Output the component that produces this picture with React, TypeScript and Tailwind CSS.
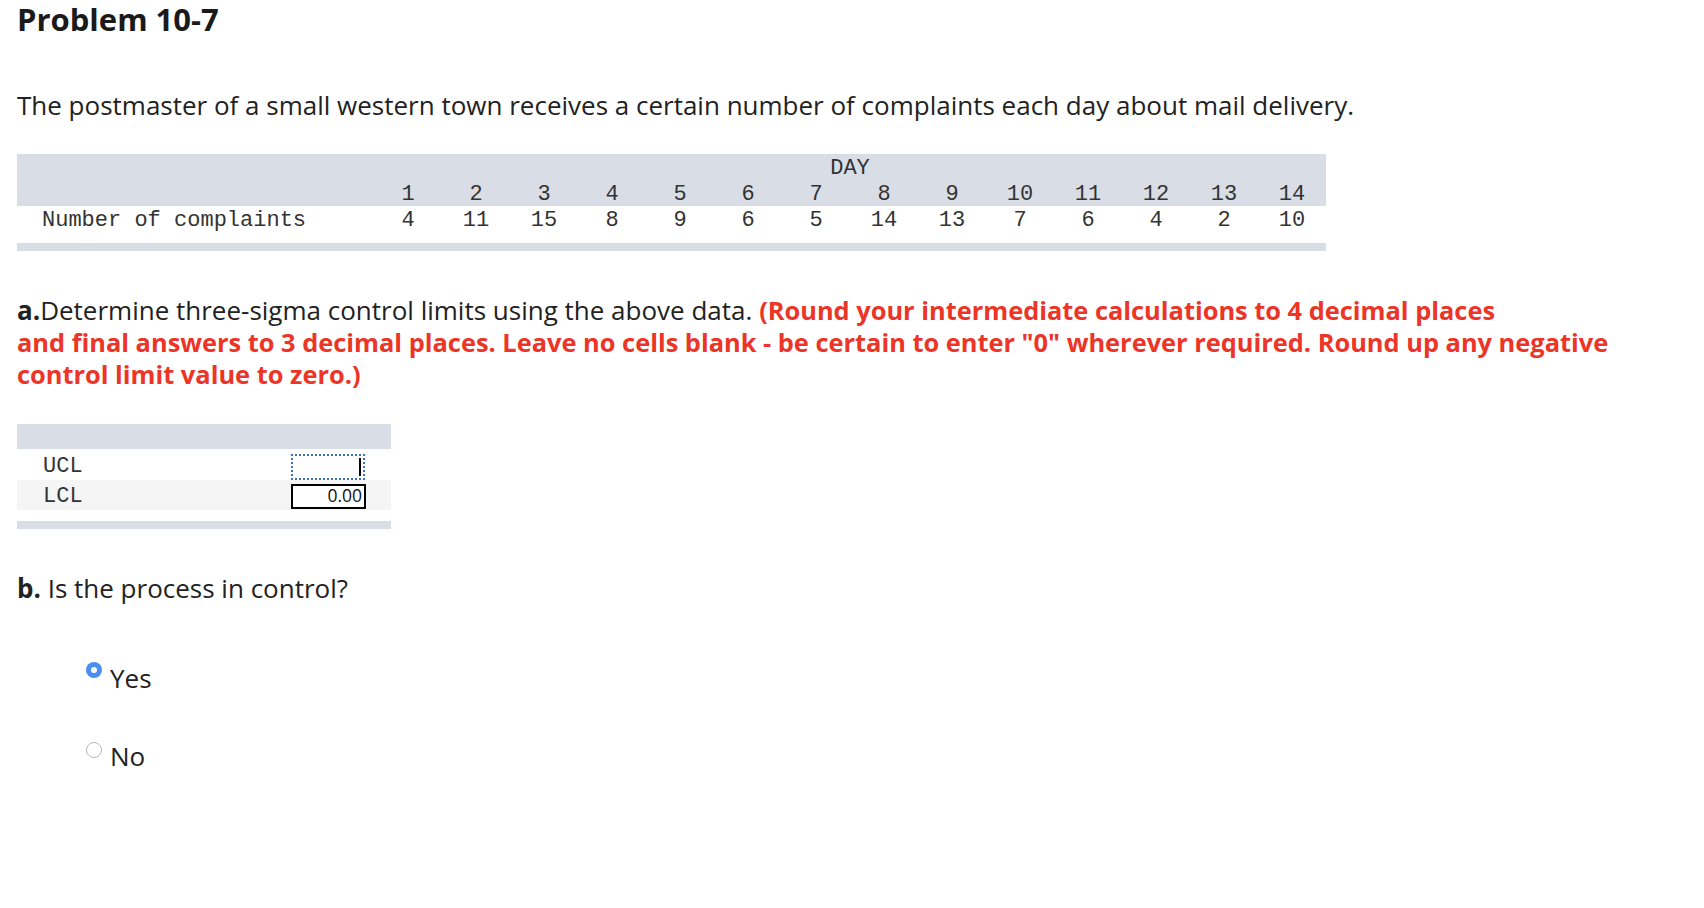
import React from 'react'

const days = [1, 2, 3, 4, 5, 6, 7, 8, 9, 10, 11, 12, 13, 14]
const complaints = [4, 11, 15, 8, 9, 6, 5, 14, 13, 7, 6, 4, 2, 10]

const sans = "font-['Open_Sans',Lato,sans-serif]"
const mono = "font-['Liberation_Mono','DejaVu_Sans_Mono',monospace]"

function DataTable() {
  return (
    <div className="mt-[33px] w-[1309px]">
      <table className={`${mono} text-[22px] text-[#333] border-collapse table-fixed w-full`}>
        <colgroup>
          <col className="w-[357px]" />
          {days.map((d) => (
            <col key={d} className="w-[68px]" />
          ))}
        </colgroup>
        <thead>
          <tr className="bg-[#d9dde6] h-[26px]">
            <th />
            <th colSpan={14} className="font-normal text-center align-top leading-[22px] pt-[4px]">
              DAY
            </th>
          </tr>
          <tr className="bg-[#d9dde6] h-[26px]">
            <th />
            {days.map((d) => (
              <th key={d} className="font-normal text-center align-top leading-[22px] pt-[4px]">
                {d}
              </th>
            ))}
          </tr>
        </thead>
        <tbody>
          <tr className="h-[26px]">
            <td className="pl-[25px] align-top leading-[22px] pt-[4px] whitespace-nowrap">Number of complaints</td>
            {complaints.map((c, i) => (
              <td key={i} className="text-center align-top leading-[22px] pt-[4px]">
                {c}
              </td>
            ))}
          </tr>
        </tbody>
      </table>
      <div className="h-[11px]" />
      <div className="h-[8px] bg-[#d9dde6]" />
    </div>
  )
}

function LimitsTable() {
  return (
    <div className={`${mono} mt-[34px] w-[374px] text-[22px] text-[#333]`}>
      <div className="h-[25px] bg-[#d9dde6]" />
      <div className="flex items-center justify-between pl-[26px] pr-[26px] pt-[5px]">
        <span className="leading-[26px]">UCL</span>
        <div className="w-[74px] h-[26px] border-2 border-dotted border-[#3b73c4] flex items-center justify-end pr-[2px]">
          <div className="w-[2px] h-[18px] bg-black" />
        </div>
      </div>
      <div className="flex items-center justify-between pl-[26px] pr-[25px] pt-[4px] pb-[1px] bg-[#f5f5f5]">
        <span className="leading-[25px]">LCL</span>
        <div className={`${sans} w-[75px] h-[25px] border-2 border-black bg-white text-right pr-[2px] text-[17.5px] leading-[19px] text-[#111]`}>
          0.00
        </div>
      </div>
      <div className="h-[11px]" />
      <div className="h-[8px] bg-[#d9dde6]" />
    </div>
  )
}

function Radio({ label, checked }: { label: string; checked?: boolean }) {
  return (
    <label className="flex items-start pl-[69px]">
      {checked ? (
        <span className="mt-0 w-[16px] h-[16px] rounded-full bg-[#4a8ff0] flex items-center justify-center">
          <span className="w-[6px] h-[6px] rounded-full bg-white" />
        </span>
      ) : (
        <span className="mt-[2px] w-[16px] h-[16px] rounded-full border border-[#b8b8b8] bg-white" />
      )}
      <span className="ml-[8px] text-[26px] leading-[32px] text-[#222]">{label}</span>
    </label>
  )
}

export default function App() {
  return (
    <div className={`${sans} min-h-[908px] w-full bg-white px-[17px] text-[#222]`}>
      <h1 className="pt-[2px] text-[31px] font-bold leading-[34px] text-[#1a1a1a]">Problem 10-7</h1>

      <p className="mt-[53px] text-[26px] leading-[32px]">
        The postmaster of a small western town receives a certain number of complaints each day about mail delivery.
      </p>

      <DataTable />

      <p className="mt-[43px] text-[26px] leading-[32px]">
        <b className="font-bold">a.</b>Determine three-sigma control limits using the above data.{' '}
        <span className="font-bold text-[25.4px] text-[#ec3527]">
          (Round your intermediate calculations to 4 decimal places
          <br />
          and final answers to 3 decimal places. Leave no cells blank - be certain to enter "0" wherever required. Round up any negative
          <br />
          control limit value to zero.)
        </span>
      </p>

      <LimitsTable />

      <p className="mt-[43px] text-[26px] leading-[32px]">
        <b className="font-bold">b.</b> Is the process in control?
      </p>

      <div className="mt-[58px]">
        <Radio label="Yes" checked />
      </div>
      <div className="mt-[46px]">
        <Radio label="No" />
      </div>
    </div>
  )
}
